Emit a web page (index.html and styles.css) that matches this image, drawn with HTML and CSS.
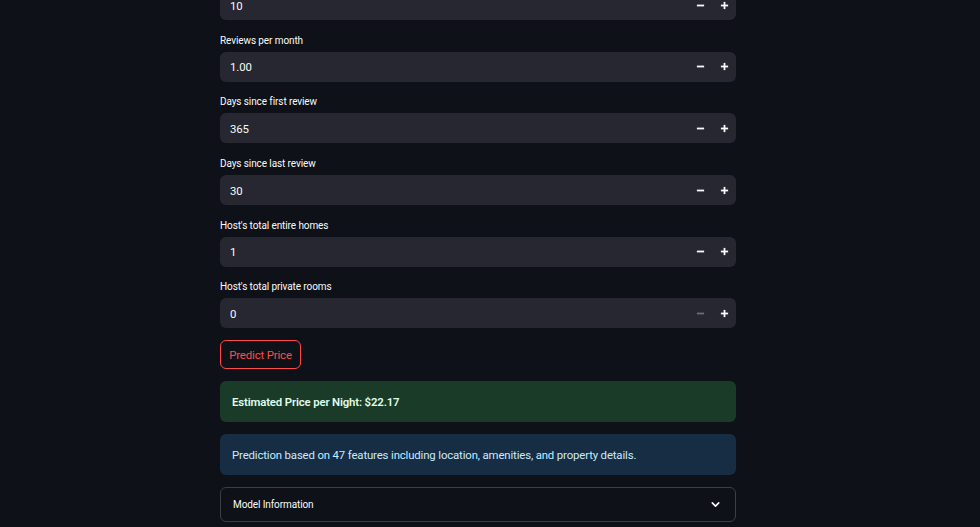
FILE: index.html
```html
<!DOCTYPE html>
<html>
<head>
<meta charset="utf-8">
<link rel="stylesheet" href="styles.css">
</head>
<body>
<div class="page">
  <div class="main">
    <div class="field first">
      <div class="numbox"><span class="val">10</span><span class="steps"><span class="step minus"><svg viewBox="0 0 10 10" width="9" height="9"><rect x="1" y="4" width="8" height="2" fill="currentColor"/></svg></span><span class="step plus"><svg viewBox="0 0 10 10" width="9" height="9"><rect x="1" y="4" width="8" height="2" fill="currentColor"/><rect x="4" y="1" width="2" height="8" fill="currentColor"/></svg></span></span></div>
    </div>
    <div class="field">
      <div class="label">Reviews per month</div>
      <div class="numbox"><span class="val">1.00</span><span class="steps"><span class="step minus"><svg viewBox="0 0 10 10" width="9" height="9"><rect x="1" y="4" width="8" height="2" fill="currentColor"/></svg></span><span class="step plus"><svg viewBox="0 0 10 10" width="9" height="9"><rect x="1" y="4" width="8" height="2" fill="currentColor"/><rect x="4" y="1" width="2" height="8" fill="currentColor"/></svg></span></span></div>
    </div>
    <div class="field">
      <div class="label">Days since first review</div>
      <div class="numbox"><span class="val">365</span><span class="steps"><span class="step minus"><svg viewBox="0 0 10 10" width="9" height="9"><rect x="1" y="4" width="8" height="2" fill="currentColor"/></svg></span><span class="step plus"><svg viewBox="0 0 10 10" width="9" height="9"><rect x="1" y="4" width="8" height="2" fill="currentColor"/><rect x="4" y="1" width="2" height="8" fill="currentColor"/></svg></span></span></div>
    </div>
    <div class="field">
      <div class="label">Days since last review</div>
      <div class="numbox"><span class="val">30</span><span class="steps"><span class="step minus"><svg viewBox="0 0 10 10" width="9" height="9"><rect x="1" y="4" width="8" height="2" fill="currentColor"/></svg></span><span class="step plus"><svg viewBox="0 0 10 10" width="9" height="9"><rect x="1" y="4" width="8" height="2" fill="currentColor"/><rect x="4" y="1" width="2" height="8" fill="currentColor"/></svg></span></span></div>
    </div>
    <div class="field">
      <div class="label">Host's total entire homes</div>
      <div class="numbox"><span class="val">1</span><span class="steps"><span class="step minus"><svg viewBox="0 0 10 10" width="9" height="9"><rect x="1" y="4" width="8" height="2" fill="currentColor"/></svg></span><span class="step plus"><svg viewBox="0 0 10 10" width="9" height="9"><rect x="1" y="4" width="8" height="2" fill="currentColor"/><rect x="4" y="1" width="2" height="8" fill="currentColor"/></svg></span></span></div>
    </div>
    <div class="field">
      <div class="label">Host's total private rooms</div>
      <div class="numbox"><span class="val">0</span><span class="steps"><span class="step minus disabled"><svg viewBox="0 0 10 10" width="9" height="9"><rect x="1" y="4" width="8" height="2" fill="currentColor"/></svg></span><span class="step plus"><svg viewBox="0 0 10 10" width="9" height="9"><rect x="1" y="4" width="8" height="2" fill="currentColor"/><rect x="4" y="1" width="2" height="8" fill="currentColor"/></svg></span></span></div>
    </div>
    <div class="btnrow"><button class="predict">Predict Price</button></div>
    <div class="alert success"><strong>Estimated Price per Night: $22.17</strong></div>
    <div class="alert info">Prediction based on 47 features including location, amenities, and property details.</div>
    <div class="expander">
      <span class="exp-title">Model Information</span>
      <svg class="chev" viewBox="0 0 12 12" width="11" height="11"><path d="M2.5 4.2 L6 7.7 L9.5 4.2" fill="none" stroke="currentColor" stroke-width="1.8" stroke-linecap="round" stroke-linejoin="round"/></svg>
    </div>
  </div>
</div>
</body>
</html>
```
FILE: styles.css
```css
html, body {
  margin: 0;
  padding: 0;
  background: #0e1117;
  height: 100%;
  overflow: hidden;
}
body {
  font-family: "Roboto", "Noto Sans", sans-serif;
  color: #fafafa;
}
.page {
  padding-left: 220px;
}
.main {
  width: 516px;
  display: flex;
  flex-direction: column;
  margin-top: -10px;
}
.field {
  display: flex;
  flex-direction: column;
  margin-bottom: 12.7px;
}
.label {
  font-size: 10px;
  letter-spacing: -0.1px;
  line-height: 14px;
  height: 14px;
  padding-top: 1px;
  margin-bottom: 4px;
  color: #fafafa;
}
.numbox {
  height: 30px;
  background: #262730;
  border-radius: 6px;
  display: flex;
  align-items: center;
  justify-content: space-between;
}
.val {
  padding-left: 10px;
  font-size: 11.4px;
  letter-spacing: -0.1px;
  color: #fafafa;
  padding-top: 1px;
}
.steps {
  display: flex;
  height: 100%;
}
.step {
  width: 23.5px;
  display: flex;
  align-items: center;
  justify-content: center;
  color: #fafafa;
}
.step.disabled {
  color: #6b6d76;
}
.btnrow {
  display: flex;
  margin-top: -0.7px;
  margin-bottom: 12px;
}
.predict {
  height: 29px;
  width: 81px;
  background: #0e1117;
  border: 1px solid #ff4b4b;
  border-radius: 6px;
  color: #ff4b4b;
  font-family: inherit;
  font-size: 11.4px;
  letter-spacing: -0.15px;
  padding: 0;
}
.alert {
  height: 41px;
  border-radius: 6px;
  display: flex;
  align-items: center;
  padding: 0 12px;
  font-size: 11.4px;
  letter-spacing: -0.15px;
  margin-bottom: 12px;
}
.alert strong {
  font-weight: 600;
}
.success {
  background: #1b3b29;
  color: #dffde9;
}
.info {
  background: #172d43;
  color: #c7ebff;
}
.expander {
  height: 35px;
  box-sizing: border-box;
  border: 1px solid #3b3e45;
  border-radius: 6px;
  display: flex;
  align-items: center;
  justify-content: space-between;
  padding: 0 14px 0 12px;
  font-size: 10px;
  letter-spacing: -0.1px;
}
.chev {
  color: #fafafa;
}
```
